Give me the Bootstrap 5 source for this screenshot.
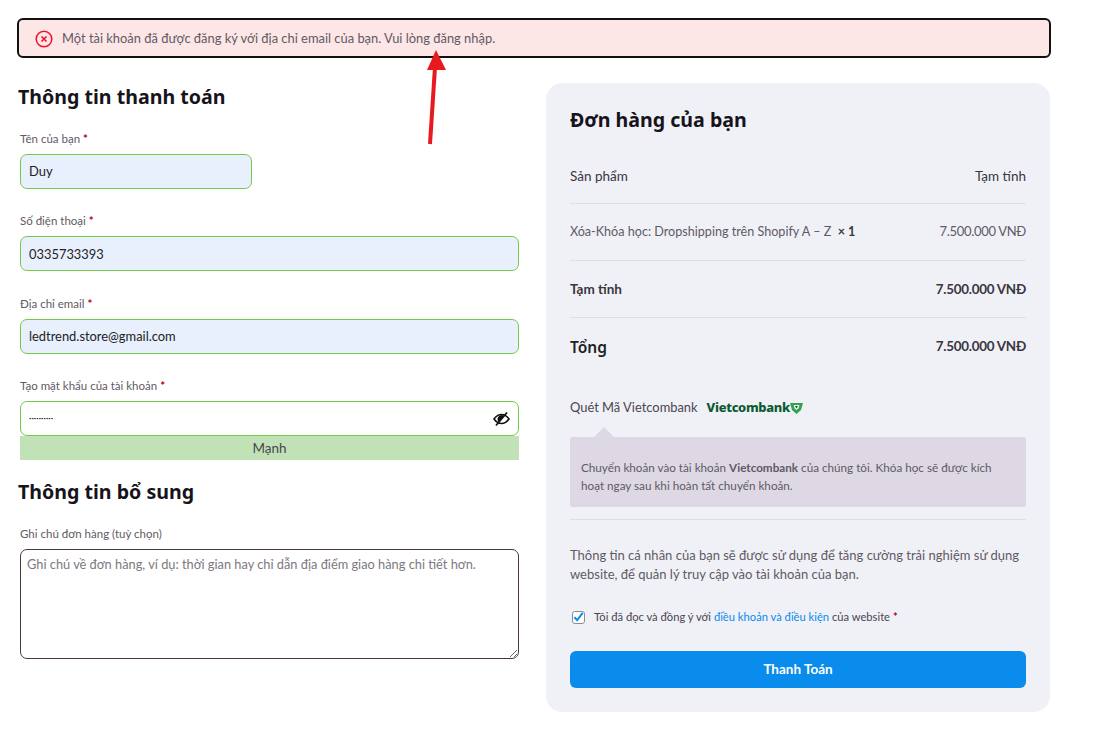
<!DOCTYPE html>
<html lang="vi"><head><meta charset="utf-8"><title>Thanh toán</title>
<link rel="stylesheet" href="https://cdn.jsdelivr.net/npm/bootstrap@5.3.0/dist/css/bootstrap.min.css">
<style>
html,body{background:#fff;overflow:hidden}
body{font-family:"Lato","Noto Sans",sans-serif;color:#4a4650;height:729px;position:relative}
.pagewrap{width:1034px;margin-left:17px;padding-top:18px}
.notice{height:40px;border:2px solid #111;border-radius:6px;background:#fde6e6;padding:1px 0 0 16px;gap:9px;font-size:12.9px;color:#5f5a64;margin-bottom:25px}
.h-bold{font-family:"Noto Sans",sans-serif;font-weight:700;font-size:19.6px;color:#16141a;margin:0}
.leftcol{width:504px;margin-right:25px}
.lefthead{margin:2px 0 21px 1px;line-height:24.5px}
.lefthead2{margin:20px 0 21px 1px;line-height:24.5px}
.fieldlabel{font-size:11.5px;color:#5f5a64;margin:0 0 7px 3px;line-height:16px;display:block}
.req{color:#b00020;font-weight:700}
.field{height:35px;border:1px solid #74c948;border-radius:7px;background:#e8f0fe;color:#222;font-size:12.9px;padding:0 8px;box-shadow:none;margin-left:3px;width:499px}
.field-short{width:232px}
.mb-a{margin-bottom:24.5px}
.pwbox{position:relative}
.field-white{background:#fff;font-size:4px;letter-spacing:.1px;height:35px}
.eye{position:absolute;right:11px;top:10px}
.strength{height:24px;margin-left:3px;width:499px;background:#c1e1b7;color:#4a4650;font-size:13.5px;line-height:24px;text-align:center}
.note{height:110px;width:499px;margin-left:3px;border:1px solid #4a3838;border-radius:7px;font-size:12.8px;padding:5px 6px;box-shadow:none;resize:vertical}
.note::placeholder{color:#7c7881}
.ordercard{width:504px;height:629px;background:#f0f1f7;border-radius:16px;padding:23px 24px 24px}
.ordertitle{line-height:28px;margin-bottom:27px}
.orow{border-bottom:1px solid #dedfe3;font-size:13.5px}
.orow-a{height:43px;padding-bottom:12px;color:#3a3640}
.orow-b{height:57px;color:#5f5a64}
.boldtxt{font-weight:700;color:#3a3640}
.pricereg{font-size:13px;letter-spacing:-.3px}
.pricebold{font-size:13.4px;letter-spacing:-.25px;font-weight:700;color:#3a3640}
.itemname{font-size:12.6px}
.totalname{font-family:"Noto Sans",sans-serif;font-weight:600;font-size:15.5px;color:#222;padding-top:2px}
.payrow{font-size:12.9px;gap:9px;margin-top:22px;height:22px}
.vcb{font-family:"Noto Sans",sans-serif;font-weight:800;font-size:12.9px;color:#0b5a31;letter-spacing:-.3px}
.paybox{position:relative;margin-top:18px;height:70px;background:#ddd8e3;border-radius:2px;padding:21px 11px 0;font-size:11.7px;line-height:18px;color:#5f5a64}
.paybox::before{content:"";position:absolute;left:24px;top:-10px;border:10px solid transparent;border-top:0;border-bottom-color:#ddd8e3}
.hrline{border-top:1px solid #dedfe3;margin:12px 0 26px}
.privacy{font-size:13px;line-height:19px;color:#5f5a64;margin:0 0 23px}
.termrow{font-size:11.2px;gap:9px;margin-left:2px;height:20px;margin-bottom:24px}
.termcheck{width:13px;height:13px;margin:0;border:1px solid #8a8a90;border-radius:1px;flex:none}
.termcheck:checked{background-color:#fff;border-color:#8a8a90;background-size:100%;background-image:url("data:image/svg+xml,%3Csvg xmlns='http://www.w3.org/2000/svg' viewBox='0 0 12 12'%3E%3Cpath d='M1.500 5.500l3 3.500 6-8' fill='none' stroke='%23098ceb' stroke-width='2.200'/%3E%3C/svg%3E")}
.termlink{color:#098ceb;text-decoration:none}
.paybtn{height:37px;background:#098ceb;border:0;border-radius:6px;color:#fff;font-weight:700;font-size:13.5px;width:100%}
.redarrow{position:absolute;left:420px;top:49px}
</style></head><body>
<div class="pagewrap">
<div class="notice d-flex align-items-center">
<svg width="18" height="18" viewBox="0 0 18 18"><circle cx="9" cy="9" r="7.800" fill="none" stroke="#f0102a" stroke-width="1.500"/><path d="M6.500 6.500l5 5M11.500 6.500l-5 5" stroke="#f0102a" stroke-width="1.600"/></svg>
<span>Một tài khoản đã được đăng ký với địa chỉ email của bạn. Vui lòng đăng nhập.</span>
</div>
<div class="d-flex align-items-start">
<div class="leftcol">
<h3 class="h-bold lefthead">Thông tin thanh toán</h3>
<label class="fieldlabel">Tên của bạn <span class="req">*</span></label>
<input class="form-control field field-short mb-a" value="Duy">
<label class="fieldlabel">Số điện thoại <span class="req">*</span></label>
<input class="form-control field mb-a" value="0335733393">
<label class="fieldlabel">Địa chỉ email <span class="req">*</span></label>
<input class="form-control field mb-a" value="ledtrend.store@gmail.com">
<label class="fieldlabel">Tạo mật khẩu của tài khoản <span class="req">*</span></label>
<div class="pwbox">
<input class="form-control field field-white" type="password" value="Abcd123456">
<svg class="eye" width="17" height="16" viewBox="0 0 17 16"><path d="M1 8C3.500 4.500 6 3.500 8.500 3.500S13.500 4.500 16 8C13.500 11.500 11 12.500 8.500 12.500S3.500 11.500 1 8Z" fill="none" stroke="#111" stroke-width="1.600"/><path d="M4.500 8a4 4 0 0 1 6.500-3l-5.300 6a4 4 0 0 1-1.200-3Z" fill="#111"/><path d="M3 14.500L14 1.500" stroke="#111" stroke-width="1.800"/></svg>
</div>
<div class="strength">Mạnh</div>
<h3 class="h-bold lefthead2">Thông tin bổ sung</h3>
<label class="fieldlabel">Ghi chú đơn hàng (tuỳ chọn)</label>
<textarea class="form-control note" placeholder="Ghi chú về đơn hàng, ví dụ: thời gian hay chỉ dẫn địa điểm giao hàng chi tiết hơn."></textarea>
</div>
<div class="ordercard">
<h3 class="h-bold ordertitle">Đơn hàng của bạn</h3>
<div class="orow orow-a d-flex justify-content-between align-items-center"><span>Sản phẩm</span><span>Tạm tính</span></div>
<div class="orow orow-b d-flex justify-content-between align-items-center"><span class="itemname">Xóa-Khóa học: Dropshipping trên Shopify A – Z &nbsp;<strong class="boldtxt">× 1</strong></span><span class="pricereg">7.500.000 VNĐ</span></div>
<div class="orow orow-b d-flex justify-content-between align-items-center"><span class="boldtxt">Tạm tính</span><span class="pricebold">7.500.000 VNĐ</span></div>
<div class="d-flex justify-content-between align-items-center orow-b"><span class="totalname">Tổng</span><span class="pricebold">7.500.000 VNĐ</span></div>
<div class="payrow d-flex align-items-center"><span>Quét Mã Vietcombank</span><span class="vcb d-inline-flex align-items-center">Vietcombank<svg width="13" height="12" viewBox="0 0 13 12"><path d="M0 1h13L11 8 6.500 12 2 8Z" fill="#2fa34a"/><path d="M3.500 3h6L8.500 6.500 6.500 8 4.500 6.500Z" fill="#f0f1f7"/><path d="M5 4h3L6.500 6.500Z" fill="#0b5a31"/></svg></span></div>
<div class="paybox">Chuyển khoản vào tài khoản <strong>Vietcombank</strong> của chúng tôi. Khóa học sẽ được kích hoạt ngay sau khi hoàn tất chuyển khoản.</div>
<div class="hrline"></div>
<p class="privacy">Thông tin cá nhân của bạn sẽ được sử dụng để tăng cường trải nghiệm sử dụng website, để quản lý truy cập vào tài khoản của bạn.</p>
<div class="termrow d-flex align-items-center"><input class="form-check-input termcheck" type="checkbox" checked><span>Tôi đã đọc và đồng ý với <a class="termlink" href="#">điều khoản và điều kiện</a> của website <span class="req">*</span></span></div>
<button class="btn paybtn">Thanh Toán</button>
</div>
</div>
</div>
<svg class="redarrow" width="30" height="96" viewBox="0 0 30 96"><path d="M10 95L15 18" stroke="#e8191f" stroke-width="4" fill="none"/><path d="M16 1L26 21H7Z" fill="#e8191f"/></svg>
</body></html>
